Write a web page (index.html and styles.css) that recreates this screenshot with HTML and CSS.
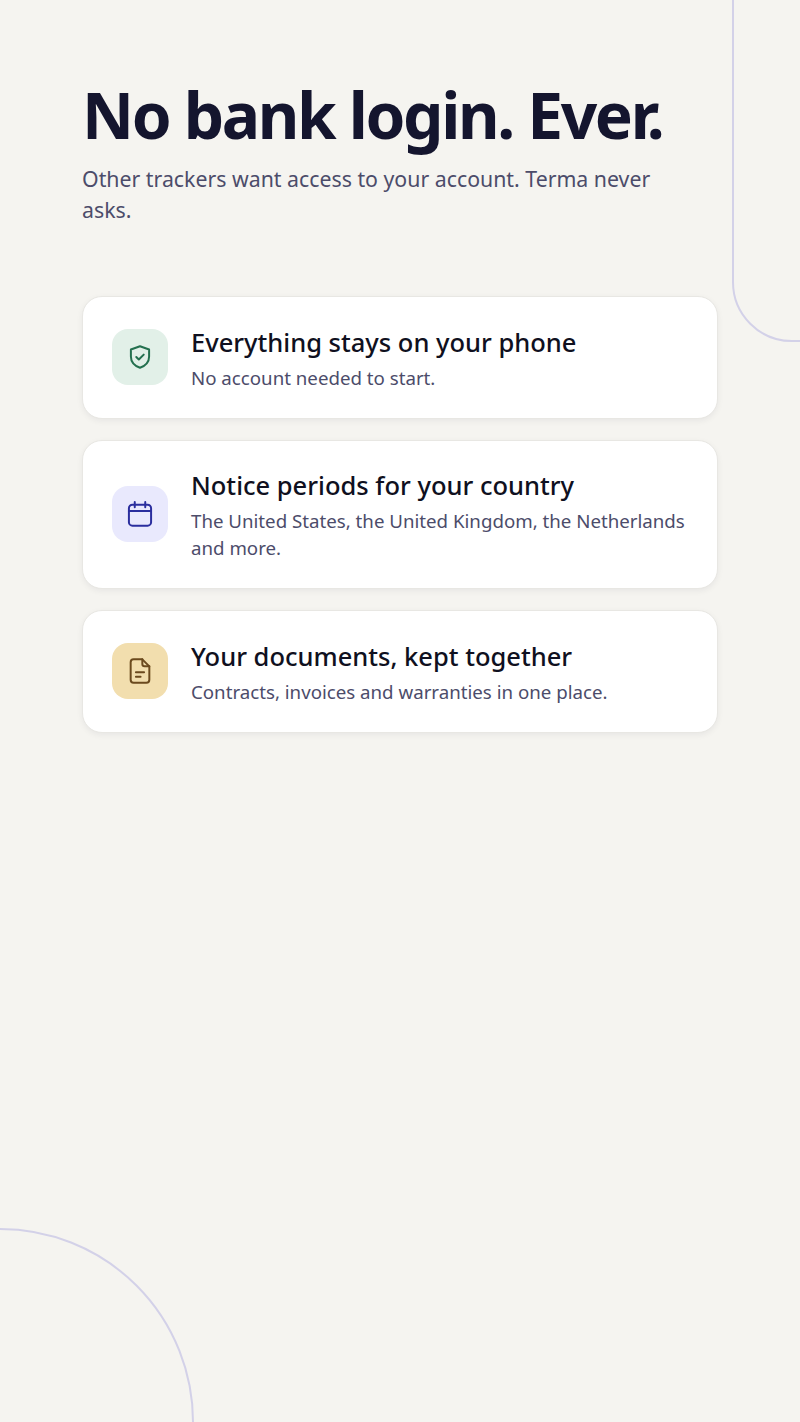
FILE: index.html
```html
<!DOCTYPE html>
<html lang="en">
<head>
<meta charset="utf-8">
<title>Terma</title>
<link rel="stylesheet" href="styles.css">
</head>
<body>
<div class="screen">
  <div class="deco deco-top"></div>
  <div class="deco deco-bottom"></div>
  <main class="content">
    <header class="intro">
      <h1>No bank login. Ever.</h1>
      <p>Other trackers want access to your account. Terma never asks.</p>
    </header>
    <section class="cards">
      <article class="card">
        <div class="icon icon-green">
          <svg viewBox="0 0 24 24" width="28" height="28"><path d="M12 2.800 19.800 5.600v5.900c0 4.600-3.200 8-7.800 9.700-4.600-1.700-7.800-5.100-7.800-9.700V5.600z"/><path d="m8.800 12 2.200 2.200 4.200-4.200"/></svg>
        </div>
        <div class="text">
          <h2>Everything stays on your phone</h2>
          <p>No account needed to start.</p>
        </div>
      </article>
      <article class="card">
        <div class="icon icon-blue">
          <svg viewBox="0 0 24 24" width="28" height="28"><rect x="2.500" y="4" width="19" height="18" rx="3"/><path d="M2.500 9.500h19M7.500 1.800v4.400M16.500 1.800v4.400"/></svg>
        </div>
        <div class="text">
          <h2>Notice periods for your country</h2>
          <p>The United States, the United Kingdom, the Netherlands and more.</p>
        </div>
      </article>
      <article class="card">
        <div class="icon icon-amber">
          <svg viewBox="0 0 24 24" width="28" height="28"><path d="M14 2H6.500A2.500 2.500 0 0 0 4 4.500v15A2.500 2.500 0 0 0 6.500 22h11a2.500 2.500 0 0 0 2.500-2.500V8z"/><path d="M14 2v4a2 2 0 0 0 2 2h4M8.500 13h7M8.500 17h4"/></svg>
        </div>
        <div class="text">
          <h2>Your documents, kept together</h2>
          <p>Contracts, invoices and warranties in one place.</p>
        </div>
      </article>
    </section>
  </main>
</div>
</body>
</html>
```
FILE: styles.css
```css
* { box-sizing: border-box; }
html, body { margin: 0; padding: 0; }
body { background: #f5f4f0; font-family: "Noto Sans", "Open Sans", sans-serif; }
.screen { position: relative; width: 800px; height: 1422px; overflow: hidden; background: #f5f4f0; }
.deco { position: absolute; border: 2.500px solid #d3d1e8; }
.deco-top { left: 732px; top: -100px; width: 200px; height: 442px; border-radius: 60px; }
.deco-bottom { left: -194px; top: 1228px; width: 388px; height: 388px; border-radius: 50%; }
.content { position: relative; padding: 80px 82px 0; }
.intro { margin-bottom: 71px; }
h1 { margin: 0 0 13px; font-size: 64px; line-height: 70px; font-weight: 700; letter-spacing: -2.340px; color: #14152e; }
.intro p { margin: 0; max-width: 590px; font-size: 21.300px; line-height: 31px; color: #4c4c6a; }
.cards { display: flex; flex-direction: column; gap: 21px; }
.card { display: flex; align-items: center; gap: 23px; padding: 26.750px 29px; background: #fff; border: 1px solid #e8e7e3; border-radius: 20px; box-shadow: 0 2px 6px rgba(20, 21, 46, .06); }
.icon { flex: none; width: 56px; height: 56px; border-radius: 16px; display: flex; align-items: center; justify-content: center; }
.icon svg { fill: none; stroke: currentColor; stroke-width: 1.700; stroke-linecap: round; stroke-linejoin: round; }
.icon-green { background: #e2f0e8; color: #24704f; }
.icon-blue { background: #e9e9fd; color: #2a2e9e; }
.icon-amber { background: #f2deae; color: #6b4a1e; }
.text { min-width: 0; }
h2 { margin: 0 0 4px; font-size: 25.500px; line-height: 36px; font-weight: 500; color: #0f1020; }
.text p { margin: 0; font-size: 18.700px; line-height: 27px; color: #4c4c6a; }
```
